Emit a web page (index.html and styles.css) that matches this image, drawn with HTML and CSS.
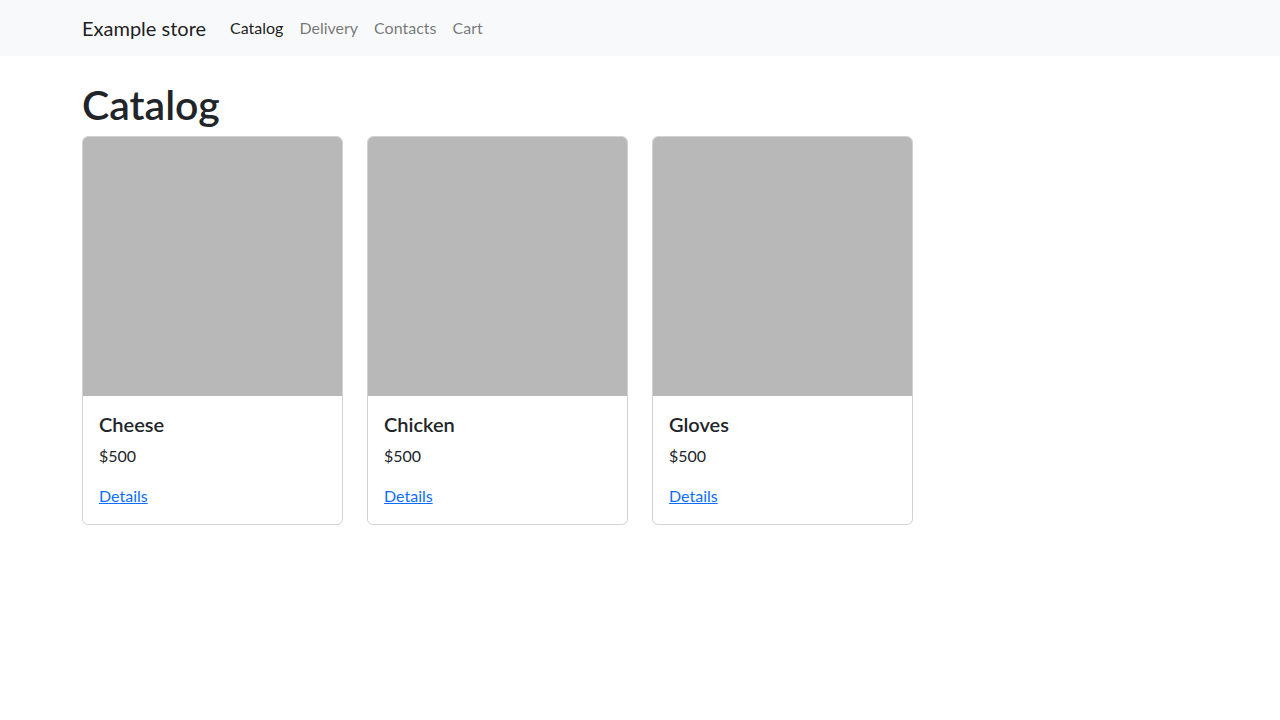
FILE: index.html
```html
<!DOCTYPE html>
<html lang="en">
<head>
<meta charset="utf-8">
<title>Example store</title>
<link rel="stylesheet" href="styles.css">
</head>
<body>
<nav class="navbar">
  <div class="container nav-inner">
    <a class="brand" href="#">Example store</a>
    <ul class="nav">
      <li><a class="nav-link active" href="#">Catalog</a></li>
      <li><a class="nav-link" href="#">Delivery</a></li>
      <li><a class="nav-link" href="#">Contacts</a></li>
      <li><a class="nav-link" href="#">Cart</a></li>
    </ul>
  </div>
</nav>
<main class="container">
  <h1 class="title">Catalog</h1>
  <div class="grid">
    <div class="card">
      <div class="card-img"></div>
      <div class="card-body">
        <h5 class="card-title">Cheese</h5>
        <p class="card-text">$500</p>
        <a href="#" class="card-link">Details</a>
      </div>
    </div>
    <div class="card">
      <div class="card-img"></div>
      <div class="card-body">
        <h5 class="card-title">Chicken</h5>
        <p class="card-text">$500</p>
        <a href="#" class="card-link">Details</a>
      </div>
    </div>
    <div class="card">
      <div class="card-img"></div>
      <div class="card-body">
        <h5 class="card-title">Gloves</h5>
        <p class="card-text">$500</p>
        <a href="#" class="card-link">Details</a>
      </div>
    </div>
  </div>
</main>
</body>
</html>
```
FILE: styles.css
```css
* { box-sizing: border-box; }
html, body { margin: 0; }
body {
  font-family: Lato, "Noto Sans", sans-serif;
  font-size: 16px;
  line-height: 1.5;
  color: #212529;
  background: #fff;
}
.container {
  max-width: 1140px;
  margin: 0 auto;
  padding: 0 12px;
}
.navbar {
  background: #f8f9fa;
  padding: 8px 0;
}
.nav-inner {
  display: flex;
  align-items: center;
}
.brand {
  font-size: 20px;
  padding: 5px 0;
  margin-right: 16px;
  color: rgba(0,0,0,.9);
  text-decoration: none;
  line-height: 1.5;
}
.nav {
  display: flex;
  list-style: none;
  margin: 0;
  padding: 0;
}
.nav-link {
  display: block;
  padding: 8px;
  color: rgba(0,0,0,.55);
  text-decoration: none;
}
.nav-link.active { color: rgba(0,0,0,.9); }
.title {
  font-size: 41px;
  font-weight: 600;
  line-height: 48px;
  margin: 25px 0 7px;
}
.grid {
  display: grid;
  grid-template-columns: repeat(4, 1fr);
  column-gap: 24px;
}
.card {
  border: 1px solid rgba(0,0,0,.175);
  border-radius: 6px;
  overflow: hidden;
  display: flex;
  flex-direction: column;
}
.card-img {
  aspect-ratio: 1 / 1;
  background: #b8b8b8;
}
.card-body {
  padding: 16px;
}
.card-title {
  font-size: 20px;
  font-weight: 600;
  line-height: 1.2;
  margin: 0 0 8px;
}
.card-text {
  margin: 0 0 16px;
}
.card-link {
  color: #0d6efd;
  text-decoration: underline;
}
```
